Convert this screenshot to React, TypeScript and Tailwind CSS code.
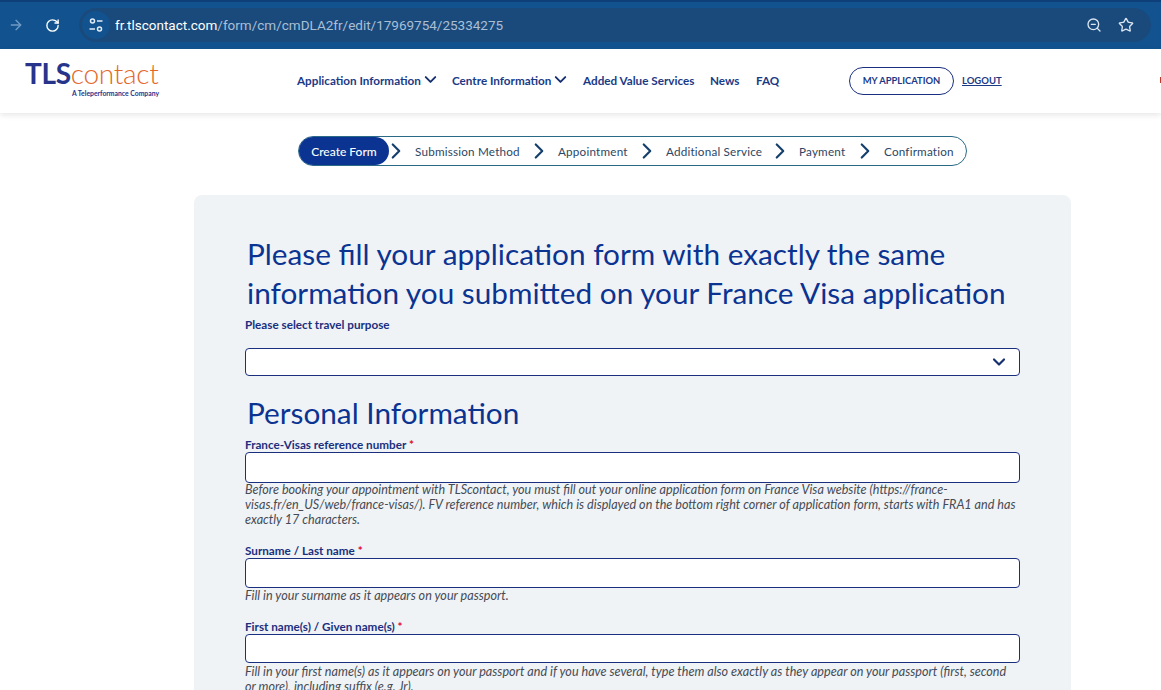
import React from 'react';
import { ArrowRight, ChevronDown, ChevronRight, RotateCw, Star, ZoomOut } from 'lucide-react';

const navy = 'text-[#1a2f7e]';

const TuneIcon = () => (
    <svg width="16" height="16" viewBox="0 0 16 16" fill="none" stroke="#e3edf7" strokeWidth="1.5">
        <circle cx="4.5" cy="4" r="2" />
        <path d="M9 4h5.5" />
        <circle cx="11.5" cy="12" r="2" />
        <path d="M1.5 12H7" />
    </svg>
);

const NavItem = ({ label, caret, className }: { label: string; caret?: boolean; className: string }) => (
    <div className={`flex items-center text-[11.7px] font-bold text-[#1b3a86] ${className}`}>
        <span>{label}</span>
        {caret && <ChevronDown size={19} strokeWidth={2.4} className="-mt-[3px] text-[#16306f]" />}
    </div>
);

const steps = ['Submission Method', 'Appointment', 'Additional Service', 'Payment', 'Confirmation'];
const stepWidths = ['w-[143px]', 'w-[108px]', 'w-[133px]', 'w-[85px]', 'w-[82px]'];

const Label = ({ text, required }: { text: string; required?: boolean }) => (
    <div className={`pb-[2px] text-[11.7px] leading-[12px] font-bold ${navy}`}>
        {text}
        {required && <span className="text-[#e2062c]"> *</span>}
    </div>
);

const Help = ({ children, className }: { children: React.ReactNode; className: string }) => (
    <p className={`text-[12.6px] leading-[15px] italic text-[#454b55] ${className}`}>{children}</p>
);

const TextBox = ({ h }: { h: string }) => (
    <div className={`${h} w-[775px] rounded-[4px] border border-[#1a2f7e] bg-white`} />
);

export default function App() {
    return (
        <div className="h-[690px] w-[1161px] overflow-hidden bg-white font-['Lato','Liberation_Sans',sans-serif]">
            {/* browser bar */}
            <div className="h-[49px] border-t-[2px] border-[#0e3f78] bg-[#12538f]">
                <div className="flex h-full items-center pb-[1px]">
                    <ArrowRight size={16} className="ml-[8px] text-[#6f9bc6]" />
                    <RotateCw size={15} strokeWidth={2.2} className="ml-[21px] text-white" />
                    <div className="ml-[19px] flex h-[34px] w-[1072px] items-center rounded-full bg-[#1a4a7c]">
                        <div className="ml-[3px] flex h-[28px] w-[28px] items-center justify-center rounded-full bg-[#12538f]">
                            <TuneIcon />
                        </div>
                        <div className="ml-[5px] text-[13.5px] font-['Roboto',sans-serif] text-[#a9bfd6]">
                            <span className="text-white">fr.tlscontact.com</span>/form/cm/cmDLA2fr/edit/17969754/25334275
                        </div>
                        <ZoomOut size={16} className="ml-auto text-[#dbe6f1]" />
                        <Star size={16} className="ml-[16px] mr-[17px] text-[#dbe6f1]" />
                    </div>
                </div>
            </div>

            {/* site header */}
            <div className="relative flex h-[64px] items-center bg-white shadow-[0_2px_6px_rgba(0,0,0,0.1)]">
                <div className="ml-[25px] -mt-[6px] w-[134px]">
                    <div className="text-[28px] leading-[28px] tracking-[-0.3px] whitespace-nowrap">
                        <span className="font-bold text-[#27348b]">TLS</span>
                        <span className="font-light text-[#e4672a]">contact</span>
                    </div>
                    <div className="mt-[2px] text-right text-[6.8px] leading-[8px] font-bold text-[#27348b]">A Teleperformance Company</div>
                </div>
                <NavItem label="Application Information" caret className="ml-[138px] w-[155px]" />
                <NavItem label="Centre Information" caret className="w-[131px]" />
                <NavItem label="Added Value Services" className="w-[127px]" />
                <NavItem label="News" className="w-[46px]" />
                <NavItem label="FAQ" className="w-[93px]" />
                <div className="flex h-[28px] w-[105px] items-center justify-center rounded-full border border-[#1a2f7e] pt-[1px] text-[9.4px] font-bold text-[#1b3a86]">
                    MY APPLICATION
                </div>
                <div className="ml-[8px] pt-[1px] text-[9.5px] font-bold text-[#1b3a86] underline">LOGOUT</div>
                <div className="absolute top-[28px] left-[1160px] h-[6px] w-[2px] bg-[#c0392b]" />
            </div>

            {/* stepper */}
            <div className="ml-[298px] mt-[23px] flex h-[30px] w-[669px] items-center rounded-full border border-[#2a6a86]">
                <div className="flex h-full w-[90px] shrink-0 items-center justify-center rounded-full bg-[#0b3391] pt-[2px] text-[12px] font-medium text-white">
                    Create Form
                </div>
                {steps.map((step, i) => (
                    <div key={step} className={`flex items-center ${stepWidths[i]} text-[11.7px] tracking-[0.2px] text-[#2d4664]`}>
                        <ChevronRight size={26} strokeWidth={2} className="-ml-[6px] shrink-0 text-[#15406b]" />
                        <span className="ml-[6px] mt-[2px] whitespace-nowrap">{step}</span>
                    </div>
                ))}
            </div>

            {/* form card */}
            <div className="ml-[194px] mt-[29px] w-[877px] rounded-lg bg-[#f0f3f6] pl-[51px] pt-[39px] pb-[40px]">
                <h1 className="ml-[2px] w-[770px] text-[29.75px] leading-[39px] font-normal text-[#0b3391]">
                    Please fill your application form with exactly the same information you submitted on your France Visa application
                </h1>
                <div className="mt-[6px]"><Label text="Please select travel purpose" /></div>
                <div className="mt-[16px] flex h-[28px] w-[775px] items-center justify-end rounded-[4px] border border-[#1a2f7e] bg-white pr-[10px]">
                    <ChevronDown size={20} strokeWidth={2.6} className="text-[#16306f]" />
                </div>
                <h2 className="ml-[2px] mt-[17px] text-[29.75px] leading-[39px] font-normal text-[#0b3391]">Personal Information</h2>
                <div className="mt-[6px]"><Label text="France-Visas reference number" required /></div>
                <TextBox h="h-[31px]" />
                <Help className="-mt-[1px]">
                    Before booking your appointment with TLScontact, you must fill out your online application form on France Visa website (https://france-
                    <br />
                    visas.fr/en_US/web/france-visas/). FV reference number, which is displayed on the bottom right corner of application form, starts with FRA1 and has
                    <br />
                    exactly 17 characters.
                </Help>
                <div className="mt-[17px]"><Label text="Surname / Last name" required /></div>
                <TextBox h="h-[30px]" />
                <Help className="mt-0">Fill in your surname as it appears on your passport.</Help>
                <div className="mt-[17px]"><Label text="First name(s) / Given name(s)" required /></div>
                <TextBox h="h-[29px]" />
                <Help className="mt-[1px]">
                    Fill in your first name(s) as it appears on your passport and if you have several, type them also exactly as they appear on your passport (first, second
                    <br />
                    or more), including suffix (e.g. Jr).
                </Help>
            </div>
        </div>
    );
}
